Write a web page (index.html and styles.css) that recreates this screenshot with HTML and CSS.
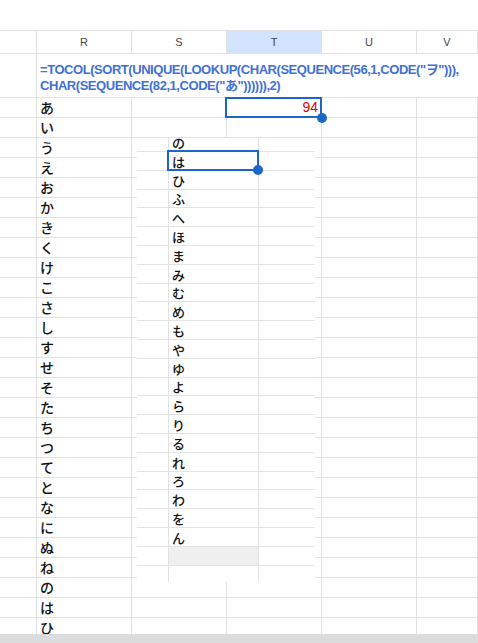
FILE: index.html
```html
<!DOCTYPE html>
<html lang="ja">

<head>
  <meta charset="UTF-8" />
  <meta name="viewport" content="width=device-width, initial-scale=1.0" />
  <title>TOCOL kana</title>
  <link rel="stylesheet" href="styles.css">
</head>

<body>
  <div class="page">
    <div class="toolbar-gap"></div>

    <div class="sheet">
      <!-- column headers -->
      <div class="row head">
        <div class="cell"></div>
        <div class="cell">R</div>
        <div class="cell">S</div>
        <div class="cell active">T</div>
        <div class="cell">U</div>
        <div class="cell">V</div>
      </div>

      <!-- row 1: the formula overflows across the empty cells -->
      <div class="row formula-row">
        <div class="cell"></div>
        <div class="cell formula">=TOCOL(SORT(UNIQUE(LOOKUP(CHAR(SEQUENCE(56,1,CODE("ヲ"))),<br>CHAR(SEQUENCE(82,1,CODE("あ")))))),2)</div>
      </div>

      <div class="row"><div class="cell"></div><div class="cell kana">あ</div><div class="cell"></div><div class="cell num selected">94<span class="handle"></span></div><div class="cell"></div><div class="cell"></div></div>
      <div class="row"><div class="cell"></div><div class="cell kana">い</div><div class="cell"></div><div class="cell"></div><div class="cell"></div><div class="cell"></div></div>
      <div class="row"><div class="cell"></div><div class="cell kana">う</div><div class="cell"></div><div class="cell"></div><div class="cell"></div><div class="cell"></div></div>
      <div class="row"><div class="cell"></div><div class="cell kana">え</div><div class="cell"></div><div class="cell"></div><div class="cell"></div><div class="cell"></div></div>
      <div class="row"><div class="cell"></div><div class="cell kana">お</div><div class="cell"></div><div class="cell"></div><div class="cell"></div><div class="cell"></div></div>
      <div class="row"><div class="cell"></div><div class="cell kana">か</div><div class="cell"></div><div class="cell"></div><div class="cell"></div><div class="cell"></div></div>
      <div class="row"><div class="cell"></div><div class="cell kana">き</div><div class="cell"></div><div class="cell"></div><div class="cell"></div><div class="cell"></div></div>
      <div class="row"><div class="cell"></div><div class="cell kana">く</div><div class="cell"></div><div class="cell"></div><div class="cell"></div><div class="cell"></div></div>
      <div class="row"><div class="cell"></div><div class="cell kana">け</div><div class="cell"></div><div class="cell"></div><div class="cell"></div><div class="cell"></div></div>
      <div class="row"><div class="cell"></div><div class="cell kana">こ</div><div class="cell"></div><div class="cell"></div><div class="cell"></div><div class="cell"></div></div>
      <div class="row"><div class="cell"></div><div class="cell kana">さ</div><div class="cell"></div><div class="cell"></div><div class="cell"></div><div class="cell"></div></div>
      <div class="row"><div class="cell"></div><div class="cell kana">し</div><div class="cell"></div><div class="cell"></div><div class="cell"></div><div class="cell"></div></div>
      <div class="row"><div class="cell"></div><div class="cell kana">す</div><div class="cell"></div><div class="cell"></div><div class="cell"></div><div class="cell"></div></div>
      <div class="row"><div class="cell"></div><div class="cell kana">せ</div><div class="cell"></div><div class="cell"></div><div class="cell"></div><div class="cell"></div></div>
      <div class="row"><div class="cell"></div><div class="cell kana">そ</div><div class="cell"></div><div class="cell"></div><div class="cell"></div><div class="cell"></div></div>
      <div class="row"><div class="cell"></div><div class="cell kana">た</div><div class="cell"></div><div class="cell"></div><div class="cell"></div><div class="cell"></div></div>
      <div class="row"><div class="cell"></div><div class="cell kana">ち</div><div class="cell"></div><div class="cell"></div><div class="cell"></div><div class="cell"></div></div>
      <div class="row"><div class="cell"></div><div class="cell kana">つ</div><div class="cell"></div><div class="cell"></div><div class="cell"></div><div class="cell"></div></div>
      <div class="row"><div class="cell"></div><div class="cell kana">て</div><div class="cell"></div><div class="cell"></div><div class="cell"></div><div class="cell"></div></div>
      <div class="row"><div class="cell"></div><div class="cell kana">と</div><div class="cell"></div><div class="cell"></div><div class="cell"></div><div class="cell"></div></div>
      <div class="row"><div class="cell"></div><div class="cell kana">な</div><div class="cell"></div><div class="cell"></div><div class="cell"></div><div class="cell"></div></div>
      <div class="row"><div class="cell"></div><div class="cell kana">に</div><div class="cell"></div><div class="cell"></div><div class="cell"></div><div class="cell"></div></div>
      <div class="row"><div class="cell"></div><div class="cell kana">ぬ</div><div class="cell"></div><div class="cell"></div><div class="cell"></div><div class="cell"></div></div>
      <div class="row"><div class="cell"></div><div class="cell kana">ね</div><div class="cell"></div><div class="cell"></div><div class="cell"></div><div class="cell"></div></div>
      <div class="row"><div class="cell"></div><div class="cell kana">の</div><div class="cell"></div><div class="cell"></div><div class="cell"></div><div class="cell"></div></div>
      <div class="row"><div class="cell"></div><div class="cell kana">は</div><div class="cell"></div><div class="cell"></div><div class="cell"></div><div class="cell"></div></div>
      <div class="row"><div class="cell"></div><div class="cell kana">ひ</div><div class="cell"></div><div class="cell"></div><div class="cell"></div><div class="cell"></div></div>

      <!-- pasted snippet of the spilled column, sitting on top of the grid -->
      <div class="snippet">
        <div class="srow first"><div class="cell"></div><div class="cell kana">の</div><div class="cell"></div></div>
        <div class="srow"><div class="cell"></div><div class="cell kana selected">は<span class="handle"></span></div><div class="cell"></div></div>
        <div class="srow"><div class="cell"></div><div class="cell kana">ひ</div><div class="cell"></div></div>
        <div class="srow"><div class="cell"></div><div class="cell kana">ふ</div><div class="cell"></div></div>
        <div class="srow"><div class="cell"></div><div class="cell kana">へ</div><div class="cell"></div></div>
        <div class="srow"><div class="cell"></div><div class="cell kana">ほ</div><div class="cell"></div></div>
        <div class="srow"><div class="cell"></div><div class="cell kana">ま</div><div class="cell"></div></div>
        <div class="srow"><div class="cell"></div><div class="cell kana">み</div><div class="cell"></div></div>
        <div class="srow"><div class="cell"></div><div class="cell kana">む</div><div class="cell"></div></div>
        <div class="srow"><div class="cell"></div><div class="cell kana">め</div><div class="cell"></div></div>
        <div class="srow"><div class="cell"></div><div class="cell kana">も</div><div class="cell"></div></div>
        <div class="srow"><div class="cell"></div><div class="cell kana">や</div><div class="cell"></div></div>
        <div class="srow"><div class="cell"></div><div class="cell kana">ゆ</div><div class="cell"></div></div>
        <div class="srow"><div class="cell"></div><div class="cell kana">よ</div><div class="cell"></div></div>
        <div class="srow"><div class="cell"></div><div class="cell kana">ら</div><div class="cell"></div></div>
        <div class="srow"><div class="cell"></div><div class="cell kana">り</div><div class="cell"></div></div>
        <div class="srow"><div class="cell"></div><div class="cell kana">る</div><div class="cell"></div></div>
        <div class="srow"><div class="cell"></div><div class="cell kana">れ</div><div class="cell"></div></div>
        <div class="srow"><div class="cell"></div><div class="cell kana">ろ</div><div class="cell"></div></div>
        <div class="srow"><div class="cell"></div><div class="cell kana">わ</div><div class="cell"></div></div>
        <div class="srow"><div class="cell"></div><div class="cell kana">を</div><div class="cell"></div></div>
        <div class="srow"><div class="cell"></div><div class="cell kana">ん</div><div class="cell"></div></div>
        <div class="srow"><div class="cell"></div><div class="cell shaded"></div><div class="cell"></div></div>
        <div class="srow"><div class="cell"></div><div class="cell"></div><div class="cell"></div></div>
      </div>
    </div>

    <div class="hscroll"></div>
  </div>
</body>

</html>
```

FILE: styles.css
```css
*,
::before,
::after {
  box-sizing: border-box;
}

html {
  font-family: Arial, 'Liberation Sans', 'Noto Sans CJK JP', sans-serif;
}

body {
  margin: 0;
  background: #fff;
}

.page {
  height: 100vh;
  display: flex;
  flex-direction: column;
  overflow: hidden;
}

.toolbar-gap {
  flex: 0 0 31px;
  border-bottom: 1px solid #e1e1e1;
}

/* grid */
.sheet {
  flex: 1;
  position: relative;
  overflow: hidden;
}

.row {
  display: grid;
  grid-template-columns: 37px 95px 95px 95px 95px 1fr;
  grid-template-rows: minmax(0, 1fr);
  height: 20px;
  border-bottom: 1px solid #e1e1e1;
}

.cell {
  border-right: 1px solid #e1e1e1;
  position: relative;
  display: flex;
  align-items: flex-end;
  min-width: 0;
  min-height: 0;
}

.head {
  height: 23px;
}

.head .cell {
  align-items: center;
  justify-content: center;
  font-size: 11px;
  color: #444;
}

.head .active {
  background: #d3e3fd;
}

.formula-row {
  height: 44px;
}

.formula {
  grid-column: 2 / 7;
  border-right: none;
  padding: 0 0 4px 3px;
  font-size: 13px;
  font-weight: bold;
  letter-spacing: -0.45px;
  line-height: 15.5px;
  color: #3f71d6;
  white-space: nowrap;
}

.kana {
  padding: 0 0 1px 3px;
  font-family: 'Noto Sans CJK JP', sans-serif;
  font-size: 14px;
  font-weight: 500;
  line-height: 18px;
  color: #111;
}

.num {
  justify-content: flex-end;
  padding: 0 3px 1px 0;
  font-size: 14px;
  line-height: 18px;
  color: #e00000;
}

/* selection box + fill handle */
.selected::after {
  content: '';
  position: absolute;
  inset: -1px -1px -1px -2px;
  border: 2px solid #1b66c9;
  pointer-events: none;
}

.handle {
  position: absolute;
  right: -6px;
  bottom: -6px;
  width: 10px;
  height: 10px;
  border-radius: 50%;
  background: #1b66c9;
  z-index: 2;
}

/* floating snippet of the spill */
.snippet {
  position: absolute;
  left: 137px;
  top: 107px;
  width: 178px;
  height: 444px;
  background: #fff;
  overflow: hidden;
  z-index: 1;
}

.srow {
  display: grid;
  grid-template-columns: 32px 90px 1fr;
  grid-template-rows: minmax(0, 1fr);
  height: 18.8px;
  border-bottom: 1px solid #e3e3e3;
}

.srow.first {
  height: 14px;
}

.srow .cell:last-child {
  border-right: none;
}

.srow .kana {
  font-size: 13px;
  line-height: 17px;
  padding-bottom: 0;
}

.srow .selected::after {
  inset: -2px -1px -1px -2px;
}

.srow .handle {
  right: -5px;
  bottom: -5px;
}

.shaded {
  background: #efefef;
}

.hscroll {
  flex: 0 0 9px;
  background: #dcdcdc;
}
```
